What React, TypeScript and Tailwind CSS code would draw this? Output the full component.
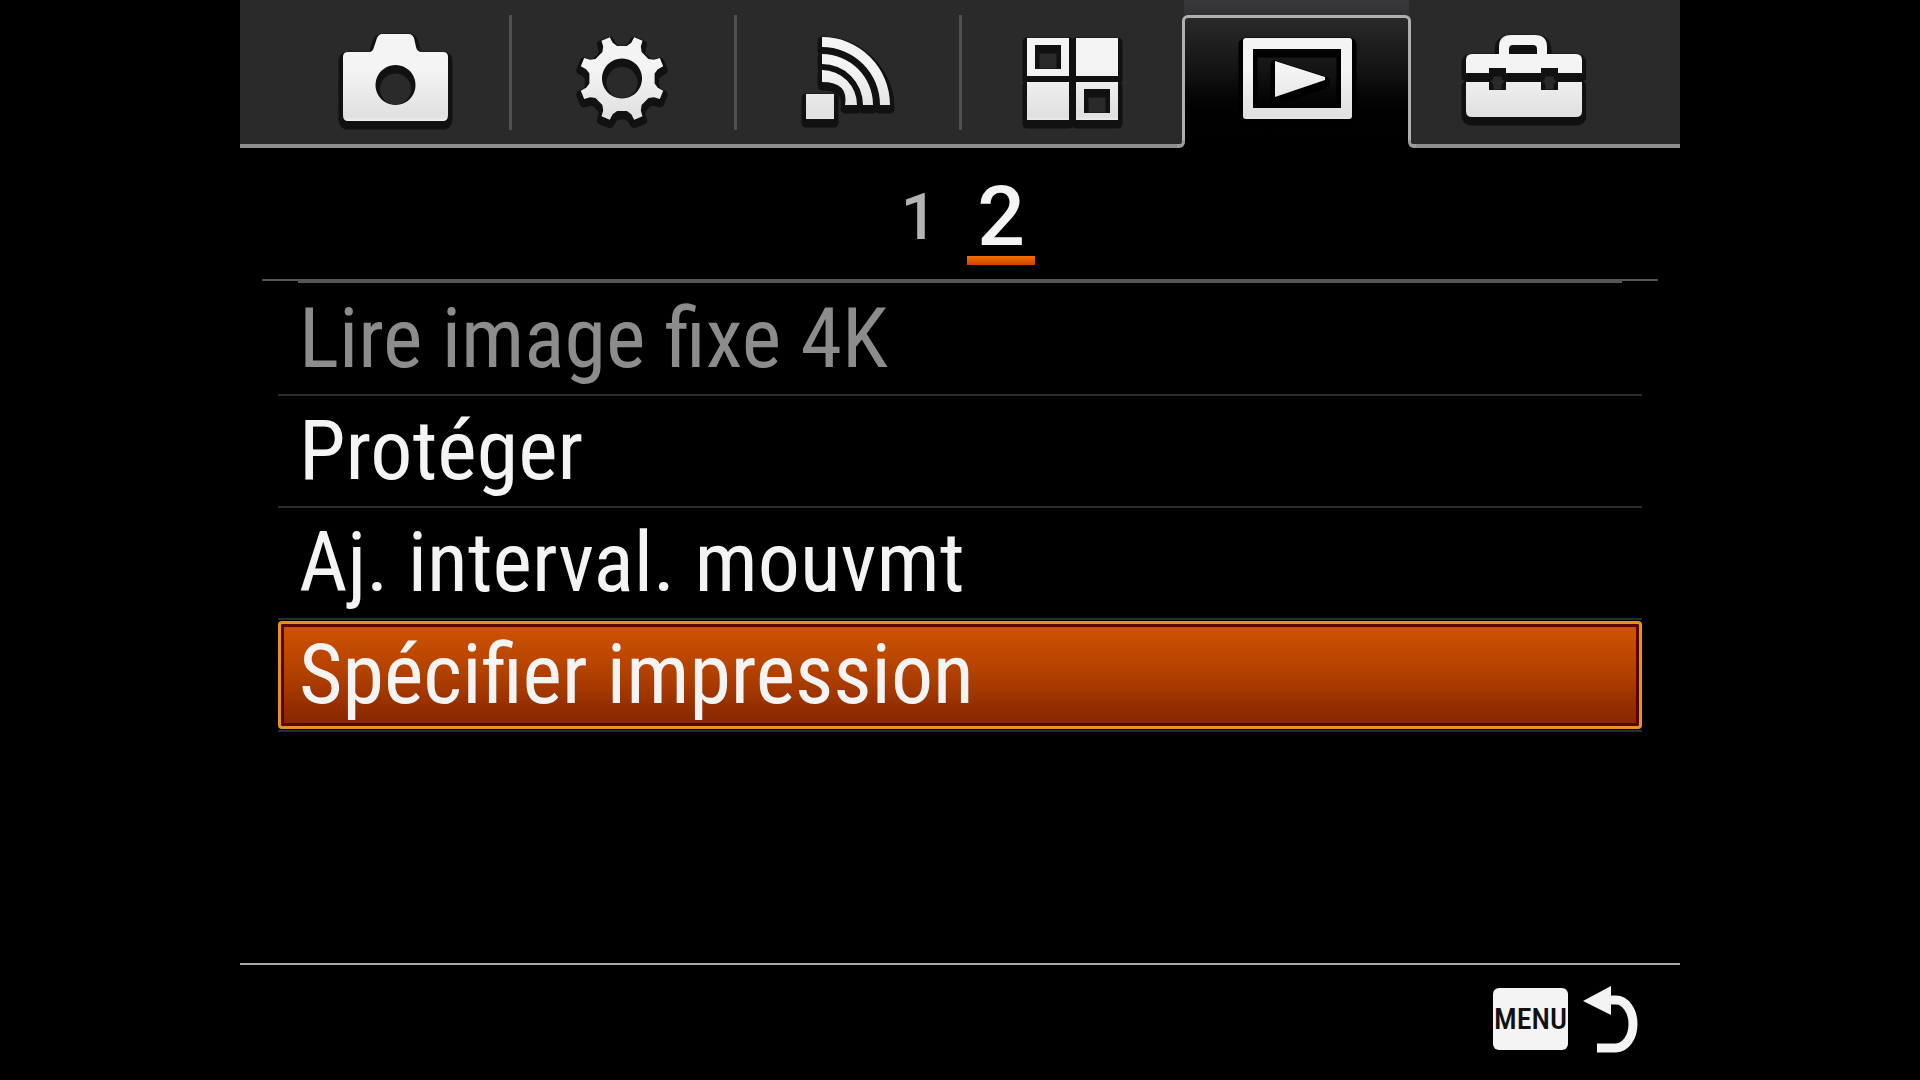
import React from 'react';
import clsx from 'clsx';

type Tab = {
  id: string;
  label: string;
  path: string;
};

type MenuItem = {
  label: string;
  disabled?: boolean;
};

const buildGearPath = (cx: number, cy: number) => {
  const points: string[] = [];

  for (let tooth = 0; tooth < 8; tooth++) {
    const middle = 22.5 + tooth * 45;

    [
      [-14, 33],
      [-8, 37],
      [-6, 43],
      [6, 43],
      [8, 37],
      [14, 33],
    ].forEach(([offset, radius]) => {
      const angle = ((middle + offset) * Math.PI) / 180;
      const x = cx + radius * Math.sin(angle);
      const y = cy - radius * Math.cos(angle);
      points.push(`${x.toFixed(1)} ${y.toFixed(1)}`);
    });
  }

  return `M${points.join('L')}ZM${cx} ${cy - 20}a20 20 0 1 0 .01 0Z`;
};

const TABS: Tab[] = [
  {
    id: 'camera',
    label: 'Prise de vue',
    path: 'M-49 52H-28Q-24 52-23 47L-20 38Q-18 34-15 34H12Q15 34 17 38L19 47Q20 52 25 52H46Q51 52 51 57V115Q51 121 46 121H-49Q-54 121-54 115V57Q-54 52-49 52ZM-1.5 65a20 20 0 1 0 .01 0Z',
  },
  {
    id: 'custom',
    label: 'Personnalisation',
    path: buildGearPath(0, 78.5),
  },
  {
    id: 'wireless',
    label: 'Sans fil',
    path: 'M-25 37A68 68 0 0 1 43 105H33A58 58 0 0 0-25 47ZM-25 54A51 51 0 0 1 26 105H16A41 41 0 0 0-25 64ZM-25 70A35 35 0 0 1 10 105H-2Q2 82-25 82ZM-41 94H-13V119H-41Z',
  },
  {
    id: 'application',
    label: 'Applications',
    path: 'M-45 38H-3V76H-45ZM-37 45V69H-11V45ZM4 38H46V76H4ZM-45 82H-3V120H-45ZM4 82H46V120H4ZM12 89V113H38V89Z',
  },
  {
    id: 'playback',
    label: 'Lecture',
    path: 'M-51 38H52Q55 38 55 41V116Q55 119 52 119H-51Q-54 119-54 116V41Q-54 38-51 38ZM-44 49V108H44V49ZM-22 61L28 77V80L-22 97Z',
  },
  {
    id: 'setup',
    label: 'Réglage',
    path: 'M-50 54H-23V47Q-23 35-11 35H13Q25 35 25 47V54H54Q60 54 60 60V73H36V68H19V73H-16V68H-33V73H-56V60Q-56 54-50 54ZM-13 54H15V49Q15 45 11 45H-9Q-13 45-13 49ZM-56 82H-33V90H-16V82H19V90H36V82H60V111Q60 117 54 117H-50Q-56 117-56 111Z',
  },
];

const ITEMS: MenuItem[] = [
  { label: 'Lire image fixe 4K', disabled: true },
  { label: 'Protéger' },
  { label: 'Aj. interval. mouvmt' },
  { label: 'Spécifier impression' },
];

const TabIcon = ({ id, path, active }: Tab & { active: boolean }) => {
  const shadow = active ? '#000000' : '#111111';

  return (
    <svg
      viewBox="-64 24 128 112"
      className="relative w-32 h-28"
      aria-hidden="true"
    >
      <defs>
        <linearGradient
          id={`shade-${id}`}
          gradientUnits="userSpaceOnUse"
          x1="0"
          y1="34"
          x2="0"
          y2="121"
        >
          <stop offset="0.4" stopColor="#f4f4f4" />
          <stop offset="0.95" stopColor="#e0e0e0" />
          <stop offset="1" stopColor="#f0f0f0" />
        </linearGradient>
      </defs>
      <path
        d={path}
        fill={shadow}
        fillRule="evenodd"
        stroke={shadow}
        strokeWidth="9"
        strokeLinejoin="round"
        transform="translate(0 4)"
      />
      <path
        d={path}
        fill={`url(#shade-${id})`}
        fillRule="evenodd"
      />
    </svg>
  );
};

// Outline of the open tab, with the small curves that join it to the bar
const ActiveTabFrame = () => (
  <span className="absolute -inset-x-[2px] top-[15px] -bottom-1">
    <span
      className="
        absolute
        inset-0
        border-3
        border-b-0
        border-[#b0b0b0]
        rounded-t-md
        bg-linear-to-b
        from-[#2a2a2a]
        via-[#111111]
        via-45%
        to-black
        to-90%
      "
    />
    <span className="absolute bottom-0 -left-[5px] size-2 bg-black">
      <span className="block size-2 bg-[#2a2a2a] border-r-3 border-b-4 border-[#9c9c9c] rounded-br-md" />
    </span>
    <span className="absolute bottom-0 -right-[5px] size-2 bg-black">
      <span className="block size-2 bg-[#2a2a2a] border-l-3 border-b-4 border-[#9c9c9c] rounded-bl-md" />
    </span>
  </span>
);

const TabBar = () => {
  const [current, setCurrent] = React.useState('playback');
  const currentIndex = TABS.findIndex((tab) => tab.id === current);

  return (
    <nav className="grid grid-cols-6 h-37 pl-11 pr-[46px] bg-[#2a2a2a] border-b-4 border-[#8e8e8e]">
      {TABS.map((tab, index) => {
        const active = tab.id === current;
        const divided =
          index > 0 && index !== currentIndex && index !== currentIndex + 1;

        return (
          <button
            key={tab.id}
            type="button"
            aria-label={tab.label}
            aria-current={active ? 'page' : undefined}
            className={clsx(
              'relative flex items-start justify-center pt-6',
              active && 'bg-linear-to-b from-[#3a3a3c] to-[#2a2a2a] to-20%',
            )}
            onClick={() => setCurrent(tab.id)}
          >
            {divided && (
              <span className="absolute left-0 top-[15px] bottom-[14px] w-[3px] bg-[#505050]" />
            )}
            {active && <ActiveTabFrame />}
            <TabIcon {...tab} active={active} />
          </button>
        );
      })}
    </nav>
  );
};

const Pager = () => (
  <div className="flex justify-center items-start h-[131px] pt-9 font-['Roboto',sans-serif] font-medium">
    <button
      type="button"
      className="w-[68px] pt-[3px] text-[64px] leading-[62px] text-[#b4b4b4]"
    >
      1
    </button>
    <button
      type="button"
      aria-current="page"
      className="w-[68px] ml-[14px] text-[#f4f4f4]"
    >
      <span className="block h-[72px] text-[84px] leading-[66px]">2</span>
      <span className="block h-[9px] bg-linear-to-b from-[#f07000] to-[#d04000]" />
    </button>
  </div>
);

const MenuList = () => {
  const [selected, setSelected] = React.useState(3);

  return (
    <ul className="mx-[38px] pt-px">
      {ITEMS.map(({ label, disabled }, index) => (
        <li key={label} className="h-28 py-px border-b-2 border-[#2c2c2c]">
          <button
            type="button"
            disabled={disabled}
            className={clsx(
              'flex items-center w-full h-full pl-[18px] border-3 rounded-sm text-left text-[84px] leading-none whitespace-nowrap',
              disabled ? 'text-[#8c8c8c]' : 'text-[#f4f4f4]',
              index === selected
                ? 'border-[#e8921e] bg-linear-to-b from-[#d05400] via-[#b04000] to-[#842400] inset-shadow-[0_0_0_3px_#5a0400]'
                : 'border-transparent',
            )}
            onClick={() => setSelected(index)}
          >
            {label}
          </button>
        </li>
      ))}
    </ul>
  );
};

const Footer = () => (
  <footer className="flex items-center justify-end h-[117px] mt-auto pr-10 pb-2 border-t-2 border-[#aaaaaa]">
    <button type="button" className="flex items-center gap-3">
      <span
        className="
          flex
          items-center
          justify-center
          w-[75px]
          h-[62px]
          rounded-md
          bg-[#f4f4f4]
          text-[30px]
          font-medium
          text-[#111111]
        "
      >
        MENU
      </span>
      <svg viewBox="0 0 60 70" className="w-[60px] h-[70px]" aria-hidden="true">
        <path d="M3 17L31 2V31Z" fill="#f4f4f4" />
        <path
          d="M28 16H36A17 24 0 0 1 36 64H17"
          fill="none"
          stroke="#f4f4f4"
          strokeWidth="9"
        />
      </svg>
    </button>
  </footer>
);

export default function App() {
  return (
    <div className="min-h-screen bg-black font-['Roboto_Condensed','Roboto',sans-serif]">
      <main className="flex flex-col w-3/4 min-h-screen mx-auto">
        <TabBar />
        <Pager />
        <div className="h-1 mx-[22px] border-t-2 border-[#555555]">
          <div className="h-0.5 mx-9 bg-[#555555]" />
        </div>
        <MenuList />
        <Footer />
      </main>
    </div>
  );
}
